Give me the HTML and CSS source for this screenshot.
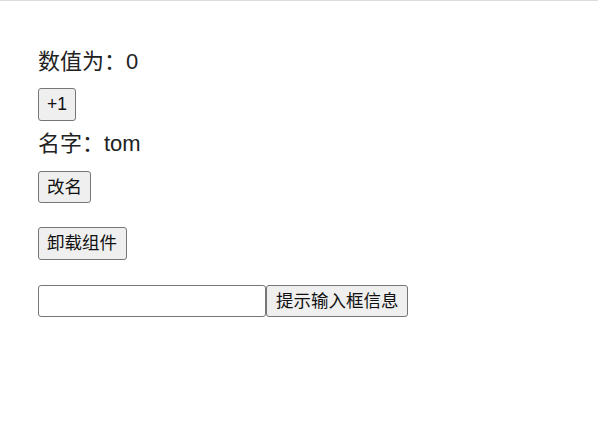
FILE: index.html
```html
<!DOCTYPE html>
<html lang="zh-CN">
<head>
<meta charset="utf-8">
<title>Demo</title>
<link rel="stylesheet" href="styles.css">
</head>
<body>
<div class="app">
  <p class="line line-count">数值为：0</p>
  <button class="btn btn-inc">+1</button>
  <p class="line line-name">名字：tom</p>
  <button class="btn btn-rename">改名</button>
  <button class="btn btn-unload">卸载组件</button>
  <div class="input-row">
    <input class="field" type="text">
    <button class="btn btn-show">提示输入框信息</button>
  </div>
</div>
</body>
</html>
```
FILE: styles.css
```css
html, body {
  margin: 0;
  padding: 0;
  background: #fff;
}
body {
  border-top: 1px solid #dcdcdc;
  font-family: "Liberation Sans", "Noto Sans CJK SC", sans-serif;
  color: #222;
}
.app {
  display: flex;
  flex-direction: column;
  align-items: flex-start;
  padding: 47px 0 0 38px;
}
.line {
  margin: 0;
  font-size: 22px;
  line-height: 28px;
}
.btn {
  font-family: "Liberation Sans", "Noto Sans CJK SC", sans-serif;
  font-size: 17.5px;
  line-height: 23px;
  padding: 4px 8px;
  margin: 0;
  border: 1px solid #767676;
  border-radius: 3px;
  background: #efefef;
  color: #111;
}
.btn-inc { margin-top: 12px; }
.line-name { margin-top: 9px; }
.btn-rename { margin-top: 13px; height: 32px; padding-top: 3px; padding-bottom: 3px; }
.btn-unload { margin-top: 24px; padding-right: 9px; }
.input-row {
  display: flex;
  margin-top: 25px;
}
.field {
  box-sizing: border-box;
  width: 228px;
  height: 32px;
  margin: 0;
  border: 1px solid #767676;
  border-radius: 3px;
  background: #fff;
}
.btn-show {
  height: 32px;
  padding: 3px 8px 3px 9px;
}
```
